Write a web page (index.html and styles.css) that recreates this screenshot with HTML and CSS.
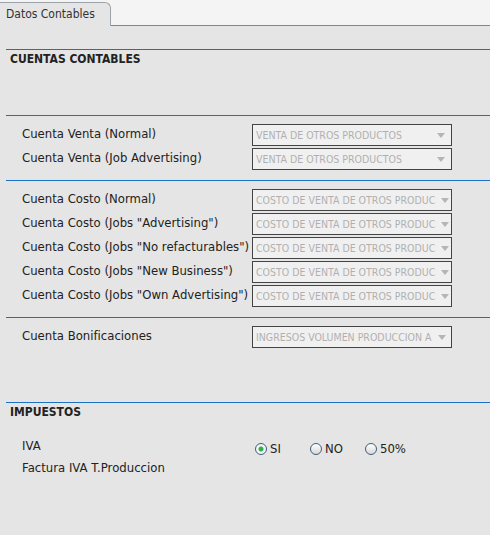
FILE: index.html
```html
<!DOCTYPE html>
<html lang="es">
<head>
    <meta charset="UTF-8">
    <title>Datos Contables</title>
    <link rel="stylesheet" href="styles.css">
</head>
<body>
    <div class="tabs">
        <div class="tab">Datos Contables</div>
    </div>

    <main class="panel">
        <section class="block">
            <h2 class="block-title">CUENTAS CONTABLES</h2>
        </section>

        <section class="group group-first">
            <div class="field">
                <label>Cuenta Venta (Normal)</label>
                <div class="combo"><span>VENTA DE OTROS PRODUCTOS</span><i class="arrow"></i></div>
            </div>
            <div class="field">
                <label>Cuenta Venta (Job Advertising)</label>
                <div class="combo"><span>VENTA DE OTROS PRODUCTOS</span><i class="arrow"></i></div>
            </div>
        </section>

        <section class="group">
            <div class="field">
                <label>Cuenta Costo (Normal)</label>
                <div class="combo"><span>COSTO DE VENTA DE OTROS PRODUC</span><i class="arrow"></i></div>
            </div>
            <div class="field">
                <label>Cuenta Costo (Jobs "Advertising")</label>
                <div class="combo"><span>COSTO DE VENTA DE OTROS PRODUC</span><i class="arrow"></i></div>
            </div>
            <div class="field">
                <label>Cuenta Costo (Jobs "No refacturables")</label>
                <div class="combo"><span>COSTO DE VENTA DE OTROS PRODUC</span><i class="arrow"></i></div>
            </div>
            <div class="field">
                <label>Cuenta Costo (Jobs "New Business")</label>
                <div class="combo"><span>COSTO DE VENTA DE OTROS PRODUC</span><i class="arrow"></i></div>
            </div>
            <div class="field">
                <label>Cuenta Costo (Jobs "Own Advertising")</label>
                <div class="combo"><span>COSTO DE VENTA DE OTROS PRODUC</span><i class="arrow"></i></div>
            </div>
        </section>

        <section class="group group-last">
            <div class="field">
                <label>Cuenta Bonificaciones</label>
                <div class="combo"><span>INGRESOS VOLUMEN PRODUCCION A</span><i class="arrow"></i></div>
            </div>
        </section>

        <section class="block block-tax">
            <h2 class="block-title">IMPUESTOS</h2>
            <div class="tax-row">
                <span class="tax-label">IVA</span>
                <div class="radios">
                    <label class="radio"><span class="dot checked"></span>SI</label>
                    <label class="radio"><span class="dot"></span>NO</label>
                    <label class="radio"><span class="dot"></span>50%</label>
                </div>
            </div>
            <div class="tax-row">
                <span class="tax-label">Factura IVA T.Produccion</span>
            </div>
        </section>
    </main>
</body>
</html>
```

FILE: styles.css
```css
html {
  box-sizing: border-box;
  font-family: "DejaVu Sans", sans-serif;
  font-size: 11.7px;
}

*,
*:before,
*:after {
  box-sizing: inherit;
}

body {
  margin: 0;
  background-color: #e5e5e5;
  color: #222;
  min-height: 535px;
}

.tabs {
  display: flex;
  align-items: flex-end;
  height: 26px;
  background-color: #f4f4f4;
  border-bottom: 1px solid #7b8794;
}

.tab {
  height: 24px;
  margin-bottom: -1px;
  padding: 4px 6px 0;
  width: 111px;
  background-color: #e5e5e5;
  border: 1px solid #9ca3aa;
  border-left: none;
  border-bottom: none;
  border-top-right-radius: 6px;
  color: #333;
  font-family: "DejaVu Sans Condensed", "DejaVu Sans", sans-serif;
  font-size: 12px;
  white-space: nowrap;
}

.panel {
  padding-top: 23px;
}

.block,
.group {
  margin-left: 6px;
  border-top: 1px solid #1a72c4;
}

.block-title {
  margin: 0;
  padding: 2px 0 0 4px;
  font-family: "DejaVu Sans Condensed", "DejaVu Sans", sans-serif;
  font-size: 12px;
  font-weight: bold;
  color: #222;
  height: 65px;
}

.group {
  padding: 8px 0 8px 16px;
}

.group-last {
  padding-bottom: 52px;
}

.field {
  display: flex;
  align-items: center;
  height: 24px;
}

.field label {
  width: 230px;
  white-space: nowrap;
  padding-bottom: 5px;
}

.combo {
  display: flex;
  align-items: center;
  width: 200px;
  height: 22px;
  margin-bottom: 2px;
  padding: 0 6px 0 3px;
  border: 1px solid #444;
  background-color: #f0f0f0;
  color: #b0b0b0;
  font-family: "DejaVu Sans Condensed", "DejaVu Sans", sans-serif;
  font-size: 10.5px;
  overflow: hidden;
}

.combo span {
  flex: 1;
  white-space: nowrap;
}

.arrow {
  width: 0;
  height: 0;
  margin-left: 6px;
  border-left: 4px solid transparent;
  border-right: 4px solid transparent;
  border-top: 5px solid #b5b5b5;
}

.block-tax .block-title {
  height: auto;
  padding-top: 2px;
  margin-bottom: 16px;
}

.tax-row {
  display: flex;
  align-items: center;
  padding-left: 16px;
  height: 22px;
}

.tax-label {
  width: 233px;
}

.radios {
  display: flex;
  padding-top: 5px;
}

.radio {
  display: flex;
  align-items: center;
  gap: 3px;
  width: 55px;
}

.dot {
  display: inline-block;
  width: 12px;
  height: 12px;
  border-radius: 50%;
  border: 1px solid #3c5f80;
  background: linear-gradient(#fff, #d8d8d8);
}

.dot.checked {
  background: radial-gradient(circle, #2db24a 0 2px, #f4f4f4 3px);
}
```
